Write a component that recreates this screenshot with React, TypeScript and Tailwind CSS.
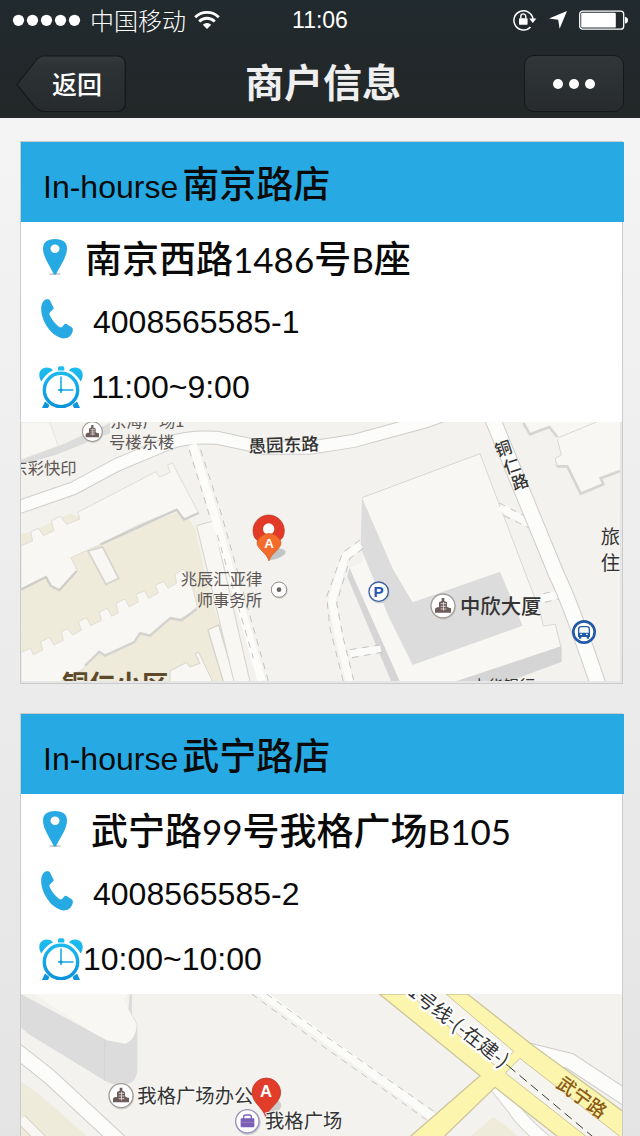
import React from "react";

const cjk = "font-['Noto_Sans_CJK_SC',sans-serif]";

type Store = {
  id: string;
  name: string;
  address: { text: string; latin?: boolean }[];
  addressGap: string;
  phone: string;
  hours: string;
  hoursGap: string;
  map: React.ReactNode;
};

function StatusBar() {
  return (
    <div className="grid h-10 grid-cols-[1fr_auto_1fr] items-center pr-3 pl-3 text-white">
      <div className="flex items-center">
        <svg className="h-3 w-[70px]" viewBox="0 0 70 12" fill="#fff" aria-hidden="true">
          {[6, 20, 34, 48, 62].map((cx) => (
            <circle key={cx} cx={cx + 0.5} cy="6.3" r="5.6" />
          ))}
        </svg>
        <span className="ml-2 text-[24px] leading-10 font-light">中国移动</span>
        <svg className="ml-2 h-5 w-[26px]" viewBox="0 0 26 20" fill="none" stroke="#fff" strokeWidth="2.8" aria-hidden="true">
          <path d="M1.2 7.2a17 17 0 0 1 23.6 0" />
          <path d="M5.2 11.4a11.2 11.2 0 0 1 15.6 0" />
          <path d="M13 19l-4.2-4.2a6 6 0 0 1 8.4 0z" fill="#fff" stroke="none" />
        </svg>
      </div>
      <span className="font-['Liberation_Sans',sans-serif] text-[23px] leading-10">11:06</span>
      <div className="flex items-center justify-end gap-3">
        <svg className="h-[22px] w-6" viewBox="0 0 24 22" aria-hidden="true">
          <path d="M17.5 18A9.6 9.6 0 1 1 20 10" fill="none" stroke="#fff" strokeWidth="1.5" />
          <path d="M16.2 9.6h7.2L19.8 14z" fill="#fff" />
          <rect x="6" y="9.3" width="8.6" height="6.4" rx="0.6" fill="#fff" />
          <path d="M7.8 9.5V7.4a2.5 2.5 0 0 1 5 0v2.1" fill="none" stroke="#fff" strokeWidth="1.4" />
        </svg>
        <svg className="h-5 w-[18px]" viewBox="0 0 18 20" fill="#fff" aria-hidden="true">
          <path d="M18 1L10.6 18.8 9.2 9.8 0 8.6z" />
        </svg>
        <svg className="h-5 w-[49px]" viewBox="0 0 49 20" aria-hidden="true">
          <rect x="0.7" y="1.2" width="44" height="18" rx="3" fill="none" stroke="#fff" strokeWidth="1.3" />
          <rect x="2.2" y="2.8" width="34.6" height="14.8" rx="1.2" fill="#fff" />
          <path d="M46 7c4 0 4 6.6 0 6.6z" fill="#fff" />
        </svg>
      </div>
    </div>
  );
}

function NavBar() {
  return (
    <div className="flex items-center justify-between px-4 pt-[15px] pb-1.5">
      <button type="button" className="relative h-[57px] w-[110px] pl-3 text-[25px] leading-[55px] font-medium text-white">
        <svg className="absolute inset-0 h-full w-full" viewBox="0 0 110 57" aria-hidden="true">
          <defs>
            <linearGradient id="backFill" x1="0" y1="0" x2="0" y2="1">
              <stop offset="0" stopColor="#34393b" />
              <stop offset="0.2" stopColor="#2d3235" />
              <stop offset="1" stopColor="#272b2d" />
            </linearGradient>
          </defs>
          <path
            d="M1 29.5L19 6.5Q23.500 1 28 1H100.500Q109.300 1 109.300 9.500V48Q109.300 56.500 100.500 56.500H28Q23.500 56.500 19 52z"
            fill="url(#backFill)"
            stroke="#14181a"
            strokeWidth="1.2"
          />
        </svg>
        <span className="relative">返回</span>
      </button>
      <h1 className="pr-1 pb-1.5 text-[39px] leading-[51px] font-bold text-[#efeff0]">商户信息</h1>
      <button
        type="button"
        aria-label="更多"
        className="flex h-[57px] w-[100px] items-center justify-center gap-1.5 rounded-[10px] border border-[#14181a] bg-linear-to-b from-[#313639] to-[#272b2d]"
      >
        <span className="size-2.5 rounded-full bg-white" />
        <span className="size-2.5 rounded-full bg-white" />
        <span className="size-2.5 rounded-full bg-white" />
      </button>
    </div>
  );
}

function PinIcon() {
  return (
    <svg className="h-9 w-6" viewBox="0 0 24 36" aria-hidden="true">
      <ellipse cx="12" cy="35" rx="6" ry="1" fill="#c9c9c9" />
      <path d="M12 0C4 0 0 3.500 0 9.500 0 18 7 27 11 35.500h1.800C17 27 24 18 24 9.500 24 3.500 20 0 12 0z" fill="#27aae4" />
      <ellipse cx="12" cy="9.800" rx="4.500" ry="4.200" fill="#fff" />
    </svg>
  );
}

function PhoneIcon() {
  return (
    <svg className="mb-1.5 h-10 w-8" viewBox="0 0 32 40" aria-hidden="true">
      <path
        d="M4.500 .6C6.500 0 8.300 0 9 1.600L12.600 8.800C13 9.700 12.400 10.200 11.600 10.800L9 13.300C8.200 14.200 8.300 15.200 8.800 16.300 10.800 20.800 14.300 25 18.300 28 19.300 28.700 20.500 28.600 21.300 27.700L23.200 25.400C23.800 24.700 24.700 24.400 25.600 24.900L31 28.500C32.200 29.500 32 31.500 31.400 33.200 29.800 37.700 26.500 39.400 22.500 39.400 16 38.800 9.500 33.500 5.200 26.300 1.500 20 -.4 13.200 .3 7.500 .7 4.500 2.300 1.600 4.500 .6z"
        fill="#27aae4"
      />
    </svg>
  );
}

function ClockIcon({ id }: { id: string }) {
  const grad = `url(#clock-${id})`;
  return (
    <svg className="h-[42px] w-11" viewBox="0 0 44 42" aria-hidden="true">
      <defs>
        <linearGradient id={`clock-${id}`} gradientUnits="userSpaceOnUse" x1="0" y1="0" x2="0" y2="42">
          <stop offset="0" stopColor="#1ec0f0" />
          <stop offset="1" stopColor="#0a92dc" />
        </linearGradient>
      </defs>
      <g fill={grad}>
        <path d="M2.300 15.500C-2 8.500 1 1.800 7.500 1.600c3.300 0 5.500 1 6.500 2.900C9 6.500 5 10.500 2.300 15.500z" />
        <path d="M41.700 15.500C46 8.500 43 1.800 36.500 1.600c-3.300 0-5.500 1-6.500 2.900C35 6.500 39 10.500 41.700 15.500z" />
        <path d="M19 4.500V2Q19 .3 20.600 .3h3Q25.300 .3 25.300 2v2.500z" />
        <path d="M6 35.500L10.500 39 9 42H3z" />
        <path d="M38 35.500L33.500 39 35 42h6z" />
      </g>
      <circle cx="22" cy="24" r="16.700" fill="none" stroke={grad} strokeWidth="3.400" />
      <path d="M22 10.500V27M19 24H34.500" fill="none" stroke="#12a6e4" strokeWidth="1.500" />
      <circle cx="22" cy="24" r="1.500" fill="#1199dc" />
    </svg>
  );
}

function BuildingMark({ x, y }: { x: number; y: number }) {
  return (
    <g transform={`translate(${x} ${y})`}>
      <circle cx="2" cy="4" r="37" fill="#cfcdc9" />
      <circle r="36" fill="#fff" stroke="#a39c98" strokeWidth="4" />
      <path d="M-24 20V8l6-4h6v-15l8-4v-9h8v9l8 4V2l8 4h4v14z" fill="#6d5c5c" />
      <path d="M-7 -7H10M-7 1H10M-7 9H10M1.500 -12V14" stroke="#e6dfdc" strokeWidth="2.500" />
    </g>
  );
}

const dash = { stroke: "#c6c4c0", strokeWidth: 3, strokeDasharray: "20 17", fill: "none" };

function NanjingMap() {
  return (
    <div className="bg-[#e6e6e6] pr-0.5 pb-0.5">
      <svg className="block h-auto w-full" viewBox="33 21 1797 777" role="img" aria-label="南京路店地图">
        <rect x="0" y="0" width="1900" height="850" fill="#f3f2ee" />

        <path d="M33 21H119L145 94 33 134z" fill="#f8f7f3" stroke="#dddcd6" strokeWidth="2" />
        <path d="M33 136L145 94 300 24V55L143 118 33 150z" fill="#dcdcdc" />

        <g fill="#eeebda">
          <path d="M33 520L215 410 500 292 540 315 556 340 590 500 625 620 670 800H33z" />
          <path d="M33 358L60 352 180 296 210 305V330L33 392z" />
        </g>

        <path
          d="M33 392L68 378 62 350 85 340 100 362 132 347 124 318 150 303 170 328 210 312 203 292 438 170 448 186 480 172 473 150 487 144 566 294 522 314 500 284 380 332 272 388 182 428 202 465 148 526 120 512 108 486 33 522z"
          fill="#f8f7f3"
          stroke="#d4d2cc"
          strokeWidth="2"
        />
        <path d="M272 388L500 284 522 314 566 294M33 524L108 486 122 512 148 526 200 468" fill="none" stroke="#cfcecb" strokeWidth="7" />
        <path d="M234 408L278 396 326 490 288 508z" fill="#f8f7f3" stroke="#d6d4cd" strokeWidth="5" />

        <path
          d="M33 712L62 700 70 720 98 705 92 680 118 668 132 690 160 676 155 650 172 642 188 660 214 645 205 620 230 608 242 632 275 616 268 592 292 580 305 604 325 594 318 565 345 552 358 576 385 560 378 538 404 528 416 550 445 534 436 510 462 500 474 520 500 504 495 478 520 462 540 488 562 575 540 595 510 612 482 606 420 660 390 652 372 680 285 722 270 708 215 765 150 800H33z"
          fill="#f8f7f3"
          stroke="#d6d4cd"
          strokeWidth="2"
        />
        <path d="M560 582L515 616 480 610 420 662 390 655 372 682 285 722 268 710 225 752" fill="none" stroke="#d4d3d0" strokeWidth="7" />
        <path d="M480 800V768L530 742 540 756 570 745 556 716 566 712 608 800z" fill="#f8f7f3" stroke="#d6d4cd" strokeWidth="3" />
        <path d="M594 645L626 630 676 800H640z" fill="#f8f7f3" stroke="#d6d4cd" strokeWidth="4" />
        <path d="M560 332L610 318 720 800H672z" fill="#f8f7f3" stroke="#d6d4cd" strokeWidth="3" />

        <path d="M28 276L190 220 320 150 480 83Q530 64 620 68L760 98 900 98 1030 78 1110 56 1240 21 1330 -10" fill="none" stroke="#cfcdca" strokeWidth="42" />
        <path d="M28 276L190 220 320 150 480 83Q530 64 620 68L760 98 900 98 1030 78 1110 56 1240 21 1330 -10" fill="none" stroke="#fcfcfb" strokeWidth="36" />
        <path d="M548 88L610 290 755 798" fill="none" stroke="#fcfcfb" strokeWidth="24" />
        <path d="M538 105L598 300M572 105L635 300 775 798M622 360L730 730" {...dash} />

        <path d="M1056 248L1410 116 1590 590 1600 633 1636 628 1652 693 1360 798H1165L1018 458 1060 442z" fill="#f8f7f3" />
        <path d="M1056 248L1410 116 1590 590 1600 633 1636 628 1652 693" fill="none" stroke="#d9d7d3" strokeWidth="3" />
        <path d="M1208 750L1538 632 1470 470 1208 562 1150 465 1056 248 1052 398 1138 610z" fill="#dcdcdc" />
        <path d="M1018 458L1170 800H1144L1012 485zM1340 798L1655 693V740L1500 798z" fill="#d5d5d5" />

        <path d="M1052 390L1005 425 966 555 985 660 1020 800M1020 716L1112 702" fill="none" stroke="#fbfbfa" strokeWidth="22" />
        <path d="M1050 375L998 412 950 545 960 640 1000 800M1060 400L1020 430 980 565 1000 670 1032 800M1020 704L1108 690M1026 728L1115 712" {...dash} />

        <path d="M1470 275L1560 328M1595 550L1655 537" fill="none" stroke="#fbfbfa" strokeWidth="24" />
        <path d="M1468 264L1545 304M1482 302L1560 340M1600 536L1650 525M1605 562L1660 548" {...dash} />
        <path d="M1445 5L1640 480Q1680 560 1765 810" fill="none" stroke="#cfcdca" strokeWidth="50" />
        <path d="M1445 5L1640 480Q1680 560 1765 810" fill="none" stroke="#fcfcfb" strokeWidth="44" />

        <path d="M1540 21L1560 55 1620 32 1640 76 1655 120 1636 130 1645 150 1670 150 1712 232 1780 205 1770 185 1830 164V21z" fill="#f8f7f3" />
        <path d="M1540 24L1560 58 1618 36 1642 66M1640 154L1672 154 1712 236 1780 208 1772 190 1830 168" fill="none" stroke="#d6d5d3" strokeWidth="8" />
        <path d="M1642 72L1654 120 1636 130 1640 154M1645 68L1760 21" fill="none" stroke="#d9d7d3" strokeWidth="3" />

        <g className={cjk} fill="#5d5654" fontSize="49">
          <text x="300" y="36">东海广场1</text>
          <text x="297" y="98">号楼东楼</text>
          <text x="4" y="178">东彩快印</text>
          <text x="512" y="510">兆辰汇亚律</text>
          <text x="560" y="574">师事务所</text>
        </g>
        <g className={cjk} fill="#333" fontSize="53" fontWeight="500">
          <text transform="translate(716 113) rotate(-2)">愚园东路</text>
          <g fontSize="50">
            <text transform="translate(1462 126) rotate(-18)">铜</text>
            <text transform="translate(1487 178) rotate(-18)">仁</text>
            <text transform="translate(1512 226) rotate(-18)">路</text>
          </g>
          <text x="1350" y="597" fontSize="61">中欣大厦</text>
          <text x="1772" y="387" fontSize="58" fontWeight="400">旅</text>
          <text x="1772" y="465" fontSize="58" fontWeight="400">住</text>
          <text x="1384" y="830" fontSize="48" fontWeight="400">中华银行</text>
        </g>
        <text className={cjk} x="156" y="836" fontSize="80" fontWeight="700" fill="#5d4a2c">铜仁小区</text>

        <g transform="translate(247 50) scale(0.83)">
          <BuildingMark x={0} y={0} />
        </g>
        <BuildingMark x={1299} y={573} />

        <circle cx="809" cy="527" r="24" fill="#d2d0cc" />
        <circle cx="807" cy="524" r="23" fill="#fff" stroke="#8f8a88" strokeWidth="3" />
        <circle cx="807" cy="524" r="7" fill="#6b625f" />

        <circle cx="1108" cy="533" r="32" fill="#d0d0d0" />
        <circle cx="1106" cy="530" r="29" fill="#fff" stroke="#3d62a6" strokeWidth="4" />
        <text x="1106" y="547" textAnchor="middle" fontSize="46" fontWeight="700" fill="#2458b0" className="font-['Liberation_Sans',sans-serif]">P</text>

        <circle cx="1722" cy="651" r="32" fill="#fff" stroke="#225aa6" strokeWidth="8" />
        <path d="M1706 664V643Q1706 635 1714 635H1730Q1738 635 1738 643V664z" fill="none" stroke="#225aa6" strokeWidth="4" />
        <path d="M1706 653H1738V664H1706zM1707 664h7v7h-7zM1730 664h7v7h-7z" fill="#225aa6" />
        <path d="M1711 658h5M1728 658h5" stroke="#fff" strokeWidth="4" />

        <path d="M778 436L800 400Q832 402 826 416 810 432 778 436z" fill="#a9b4b6" opacity="0.7" />
        <path d="M734 368A47 47 0 1 1 818 368L800 385H750z" fill="#e23a26" stroke="#b52f20" strokeWidth="2" />
        <circle cx="776" cy="342" r="17" fill="#fff" />
        <path d="M777 438C770 412 741 404 741 382A37 34 0 0 1 813 382C813 404 785 412 777 438z" fill="#f36c2c" stroke="#c9501f" strokeWidth="2" />
        <text x="777" y="400" textAnchor="middle" fontSize="40" fontWeight="700" fill="#fff" className="font-['Liberation_Sans',sans-serif]">A</text>
      </svg>
    </div>
  );
}

function WuningMap() {
  return (
    <svg className="block h-auto w-full" viewBox="33 27 1803 780" role="img" aria-label="武宁路店地图">
      <rect x="0" y="0" width="1900" height="850" fill="#f3f2ee" />

      <path d="M33 27L290 165 345 175 360 20 366 27V88L382 118V255Q378 298 340 300 310 300 285 287L60 150 33 128z" fill="#dcdcdc" />
      <path d="M72 27L240 138 290 165 345 176Q378 166 380 118L340 45 352 27z" fill="#f8f7f3" />
      <path d="M284 165V287" stroke="#d0d0d0" strokeWidth="2" />

      <path d="M33 290L90 330 230 453 560 807H33z" fill="#eeebda" />
      <path d="M33 402L330 700" stroke="#d8d4c6" strokeWidth="34" />
      <path d="M33 402L330 700" stroke="#f8f7f3" strokeWidth="28" />
      <path d="M20 197L115 272 340 480 640 807" fill="none" stroke="#cfcdca" strokeWidth="48" />
      <path d="M20 197L115 272 340 480 640 807" fill="none" stroke="#fcfcfb" strokeWidth="42" />

      <path d="M750 20L950 165 1268 395" fill="none" stroke="#fbfbfa" strokeWidth="24" />
      <path d="M770 27L975 173 1280 385M725 27L945 188 1250 405" {...dash} />

      <path d="M1380 455L1450 395 1510 440 1600 530 1400 700z" fill="#eeebda" />
      <path d="M1460 305L1515 375Q1535 410 1620 480" fill="none" stroke="#cfcdca" strokeWidth="42" />
      <path d="M1460 305L1515 375Q1535 410 1620 480" fill="none" stroke="#fcfcfb" strokeWidth="37" />
      <path d="M1550 196L1680 228 1850 340" fill="none" stroke="#cfcdca" strokeWidth="50" />
      <path d="M1550 196L1680 228 1850 340" fill="none" stroke="#fcfcfb" strokeWidth="44" />

      <path d="M1108 27L1410 272 1000 630 1090 660 1455 307 1840 610V380L1570 182 1372 27z" fill="#fcf5ad" stroke="#cdc69b" strokeWidth="4" />
      <path d="M1190 20L1460 245 1512 200 1300 20z" fill="#f5f4ef" stroke="#cdc69b" strokeWidth="3" />
      <path d="M1486 264L1530 220 1850 470V550z" fill="#f5f4ef" stroke="#cdc69b" strokeWidth="3" />
      <path d="M1495 243L1850 540" stroke="#3b3b3b" strokeWidth="3" strokeDasharray="28 16" />
      <path d="M1200 16L1495 243" stroke="#5b5b5b" strokeWidth="3" strokeDasharray="28 16" />

      <text
        className={cjk}
        transform="translate(1190 26) rotate(38)"
        fontSize="58"
        fill="#333"
        stroke="#fff"
        strokeWidth="14"
        strokeLinejoin="round"
        paintOrder="stroke"
      >
        1号线-(-在建-)
      </text>
      <text className={cjk} transform="translate(1636 304) rotate(36)" fontSize="56" fontWeight="500" fill="#8b5a16">武宁路</text>

      <BuildingMark x={333} y={332} />
      <text className={cjk} x="382" y="355" fill="#333" fontSize="58" stroke="#f8f8f5" strokeWidth="5" paintOrder="stroke">我格广场办公</text>

      <path d="M770 394L800 345Q822 355 810 372 795 388 770 394z" fill="#bdbdbd" opacity="0.7" />
      <path d="M767 397C760 368 726 354 726 322A43 43 0 0 1 812 322C812 354 776 368 767 397z" fill="#e23d2b" stroke="#b83225" strokeWidth="2" />
      <text x="768" y="337" textAnchor="middle" fontSize="50" fontWeight="700" fill="#fff" className="font-['Liberation_Sans',sans-serif]">A</text>

      <text className={cjk} x="765" y="429" fill="#333" fontSize="58" stroke="#f8f8f5" strokeWidth="5" paintOrder="stroke">我格广场</text>
      <circle cx="714" cy="412" r="38" fill="#cfcdd2" />
      <circle cx="712" cy="409" r="35" fill="#fff" stroke="#9a92be" strokeWidth="4" />
      <rect x="692" y="400" width="41" height="27" rx="3" fill="#7b5eb5" />
      <path d="M701 402V396Q701 390 707 390H718Q724 390 724 396V402" fill="none" stroke="#7b5eb5" strokeWidth="4" />
      <path d="M692 412H733" stroke="#a48fd0" strokeWidth="2" />
    </svg>
  );
}

const stores: Store[] = [
  {
    id: "nanjing",
    name: "南京路店",
    address: [
      { text: "南京西路" },
      { text: "1486", latin: true },
      { text: "号" },
      { text: "B", latin: true },
      { text: "座" },
    ],
    addressGap: "gap-0.5",
    phone: "4008565585-1",
    hours: "11:00~9:00",
    hoursGap: "gap-2",
    map: <NanjingMap />,
  },
  {
    id: "wuning",
    name: "武宁路店",
    address: [
      { text: "武宁路" },
      { text: "99", latin: true },
      { text: "号我格广场" },
      { text: "B105", latin: true },
    ],
    addressGap: "gap-2",
    phone: "4008565585-2",
    hours: "10:00~10:00",
    hoursGap: "gap-0",
    map: <WuningMap />,
  },
];

function StoreCard({ store }: { store: Store }) {
  return (
    <article className="border border-[#cbcbcb] bg-white text-[#0a0a0a]">
      <h2 className="-mr-0.5 flex h-20 items-baseline gap-1 bg-[#27aae4] px-[22px] text-[37px] leading-[80px] font-medium">
        <span className="font-['Liberation_Sans',sans-serif] text-[32px] leading-none font-normal">In-hourse</span>
        <span>{store.name}</span>
      </h2>
      <div className="pl-[18px]">
        <div className={`flex h-[70px] items-center ${store.addressGap}`}>
          <span className="flex w-11 justify-center pr-3">
            <PinIcon />
          </span>
          <p className="text-[37px] leading-[70px] font-medium">
            {store.address.map((part, i) => (
              <span key={i} className={part.latin ? "font-['Lato',sans-serif] text-[35px] leading-none font-normal" : ""}>
                {part.text}
              </span>
            ))}
          </p>
        </div>
        <div className="flex h-[60px] items-center gap-2.5">
          <span className="flex w-11 justify-start pl-0.5">
            <PhoneIcon />
          </span>
          <a href={`tel:${store.phone}`} className="font-['Liberation_Sans',sans-serif] text-[32px] leading-[60px]">
            {store.phone}
          </a>
        </div>
        <div className={`flex h-[70px] items-center ${store.hoursGap}`}>
          <ClockIcon id={store.id} />
          <p className="font-['Liberation_Sans',sans-serif] text-[32px] leading-[70px]">{store.hours}</p>
        </div>
      </div>
      {store.map}
    </article>
  );
}

export default function App() {
  return (
    <div className="flex h-screen flex-col font-['Noto_Sans_CJK_SC',sans-serif]">
      <header className="shrink-0 bg-linear-to-b from-[#212a2e] to-[#232728]">
        <StatusBar />
        <NavBar />
      </header>
      <main className="flex min-h-0 flex-1 flex-col gap-[29px] overflow-y-auto bg-linear-to-b from-[#f4f4f4] to-[#e4e4e4] pt-[23px] pr-[17px] pb-6 pl-5 [scrollbar-width:none]">
        {stores.map((store) => (
          <StoreCard key={store.id} store={store} />
        ))}
      </main>
    </div>
  );
}
